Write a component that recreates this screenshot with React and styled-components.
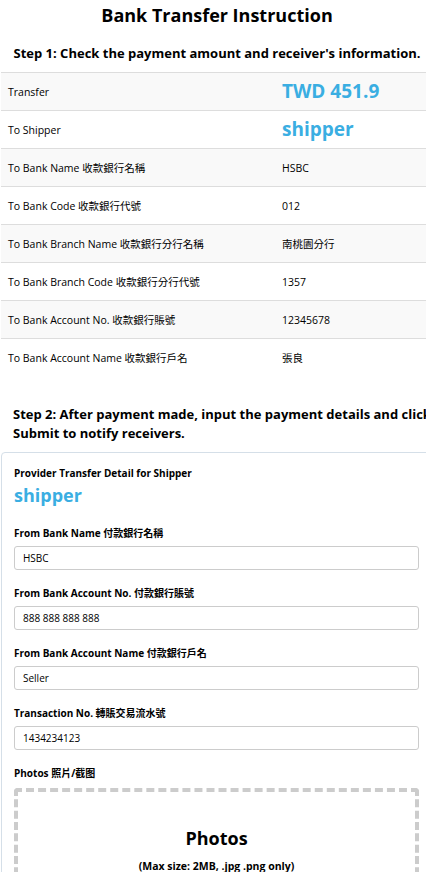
import React from 'react';
import styled, { createGlobalStyle } from 'styled-components';

const GlobalStyle = createGlobalStyle`
  html, body {
    margin: 0;
    padding: 0;
    background: #fff;
    overflow-x: hidden;
  }
  body {
    font-family: "Open Sans", "Noto Sans CJK TC", sans-serif;
    color: #000;
  }
`;

const Page = styled.div`
  width: 432px;
  padding-left: 1px;
`;

const Title = styled.h1`
  margin: 0;
  padding-top: 2px;
  height: 30px;
  font-size: 18px;
  font-weight: 700;
  text-align: center;
  line-height: 26px;
`;

const StepHeading = styled.h2`
  margin: 0;
  font-size: 13px;
  font-weight: 700;
  line-height: 19px;
  text-align: ${(p) => (p.$center ? 'center' : 'left')};
  padding: ${(p) => p.$pad};
  width: ${(p) => p.$width || 'auto'};
`;

const Table = styled.div`
  border-top: 1px solid #ddd;
`;

const Row = styled.div`
  display: grid;
  grid-template-columns: 281px 1fr;
  align-items: center;
  height: 37px;
  border-bottom: ${(p) => (p.$last ? 'none' : '1px solid #ddd')};
  background: ${(p) => (p.$odd ? '#f9f9f9' : '#fff')};
`;

const Label = styled.div`
  padding-left: 7px;
  font-size: 10.5px;
`;

const Value = styled.div`
  font-size: 10.5px;
`;

const Highlight = styled.span`
  color: #3aaee2;
  font-weight: 700;
  font-size: ${(p) => p.$size || '19px'};
  line-height: 1;
`;

const ProviderName = styled.div`
  margin-top: 5px;
`;

const Card = styled.div`
  margin-top: 1px;
  border: 1px solid #d5dfe8;
  border-radius: 4px;
  padding: 13px 0 0 12px;
  width: 440px;
`;

const FieldLabel = styled.div`
  font-size: 10px;
  font-weight: 700;
  line-height: 14px;
  margin-top: ${(p) => p.$mt || '0'};
`;

const Input = styled.div`
  box-sizing: border-box;
  width: 405px;
  height: 24px;
  margin-top: 6px;
  border: 1px solid #ccc;
  border-radius: 3px;
  padding: 0 8px;
  display: flex;
  align-items: center;
  font-size: 10px;
`;

const DropZone = styled.div`
  box-sizing: border-box;
  width: 405px;
  height: 110px;
  margin-top: 8px;
  border: 4px dashed #ccc;
  border-radius: 4px;
  display: flex;
  flex-direction: column;
  align-items: center;
  padding-top: 34px;
`;

const DropTitle = styled.div`
  font-size: 18px;
  font-weight: 700;
  line-height: 24px;
`;

const DropNote = styled.div`
  font-size: 10.5px;
  font-weight: 700;
  margin-top: 9px;
`;

const rows = [
  ['Transfer', <Highlight key="a">TWD 451.9</Highlight>],
  ['To Shipper', <Highlight key="b">shipper</Highlight>],
  ['To Bank Name 收款銀行名稱', 'HSBC'],
  ['To Bank Code 收款銀行代號', '012'],
  ['To Bank Branch Name 收款銀行分行名稱', '南桃園分行'],
  ['To Bank Branch Code 收款銀行分行代號', '1357'],
  ['To Bank Account No. 收款銀行賬號', '12345678'],
  ['To Bank Account Name 收款銀行戶名', '張良'],
];

const fields = [
  ['From Bank Account No. 付款銀行賬號', '888 888 888 888'],
  ['From Bank Account Name 付款銀行戶名', 'Seller'],
  ['Transaction No. 轉賬交易流水號', '1434234123'],
];

export default function App() {
  return (
    <Page>
      <GlobalStyle />
      <Title>Bank Transfer Instruction</Title>
      <StepHeading $center $pad="12px 0 9px">
        Step 1: Check the payment amount and receiver's information.
      </StepHeading>
      <Table>
        {rows.map(([label, value], i) => (
          <Row key={label} $odd={i % 2 === 0} $last={i === rows.length - 1}>
            <Label>{label}</Label>
            <Value>{value}</Value>
          </Row>
        ))}
      </Table>
      <StepHeading $pad="29px 0 8px 12px" $width="430px">
        Step 2: After payment made, input the payment details and click Submit to notify receivers.
      </StepHeading>
      <Card>
        <FieldLabel>Provider Transfer Detail for Shipper</FieldLabel>
        <ProviderName>
          <Highlight $size="18px">shipper</Highlight>
        </ProviderName>
        <FieldLabel $mt="19px">From Bank Name 付款銀行名稱</FieldLabel>
        <Input>HSBC</Input>
        {fields.map(([label, value]) => (
          <React.Fragment key={label}>
            <FieldLabel $mt="16px">{label}</FieldLabel>
            <Input>{value}</Input>
          </React.Fragment>
        ))}
        <FieldLabel $mt="16px">Photos 照片/截图</FieldLabel>
        <DropZone>
          <DropTitle>Photos</DropTitle>
          <DropNote>(Max size: 2MB, .jpg .png only)</DropNote>
        </DropZone>
      </Card>
    </Page>
  );
}
